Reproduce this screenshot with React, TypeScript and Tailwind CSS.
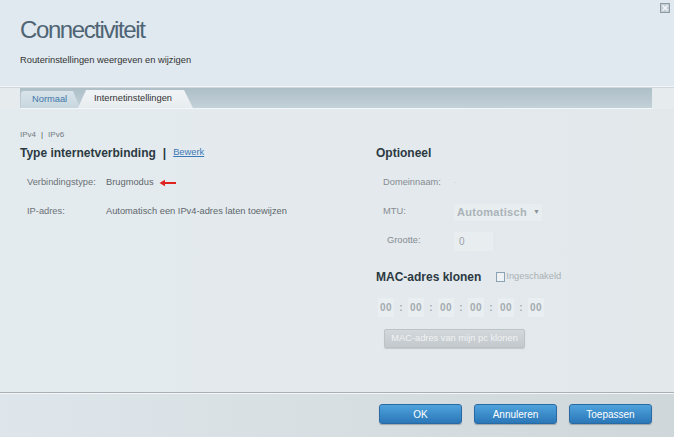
import React from "react";

function CloseIcon() {
  return (
    <svg width="10" height="10" viewBox="0 0 10 10" className="absolute left-[660px] top-[3px]">
      <rect x="0.5" y="0.5" width="9" height="9" fill="#c3cdd3" stroke="#8e9ca6" />
      <path d="M2.5 2.5 L7.5 7.5 M7.5 2.5 L2.5 7.5" stroke="#f4f7f9" strokeWidth="1.6" />
    </svg>
  );
}

function RedArrow() {
  return (
    <svg width="18" height="8" viewBox="0 0 18 8" className="ml-[5px]">
      <path d="M0.5 4 L6 0.8 L6 7.2 Z" fill="#e0231f" />
      <rect x="5" y="3" width="12" height="2" fill="#e0231f" />
    </svg>
  );
}

function MacBox() {
  return (
    <div className="w-[16px] h-[19px] bg-[#e9eef1] flex items-center justify-center text-[10px] font-bold text-[#a3abb0] tracking-[0.5px]">
      00
    </div>
  );
}

function Colon() {
  return <span className="w-[14px] text-center text-[10px] font-bold text-[#a3abb0]">:</span>;
}

export default function App() {
  const btn =
    "w-[83px] h-[20px] rounded-[3px] border border-[#2a6aa2] bg-linear-to-b from-[#4fa3dc] to-[#2a77b8] text-white text-[10px] flex items-center justify-center shadow-[0_1px_1px_rgba(0,0,0,0.25)]";
  return (
    <div className="relative w-[674px] h-[437px] overflow-hidden bg-[#e6ebee] font-['Liberation_Sans',Arial,sans-serif] text-[9.3px]">
      {/* Header */}
      <div className="h-[88px] bg-[#e0e9ef] px-[20px] pt-[18px] border-b border-[#cfd8de] shadow-[inset_0_-6px_0_-5px_#f2f6f8]">
        <div className="text-[24px] leading-[24px] text-[#4f6474] tracking-[-1.4px]">Connectiviteit</div>
        <div className="mt-[12px] text-[9.3px] leading-[12px] text-[#333]">Routerinstellingen weergeven en wijzigen</div>
      </div>
      <CloseIcon />

      {/* Tab bar */}
      <div className="flex">
        <div className="ml-[20px] w-[633px] h-[20px] bg-linear-to-b from-[#aebfc8] to-[#c3d1d8] flex items-end border-r border-[#e4eaed]">
          <div className="ml-[1px] w-[59px] h-[17px] rounded-tl-[3px] bg-linear-to-b from-[#d9e4ea] to-[#c7d6de] text-[#3f77ab] flex items-center pl-[11px] [clip-path:polygon(0_0,calc(100%-7px)_0,100%_100%,0_100%)]">
            Normaal
          </div>
          <div className="-ml-[2px] w-[115px] h-[18px] bg-linear-to-b from-[#f1f4f6] to-[#e7ecef] text-[#333] flex items-center pl-[16px] [clip-path:polygon(0_100%,8px_0,calc(100%-9px)_0,100%_100%)]">
            Internetinstellingen
          </div>
        </div>
      </div>
      <div className="h-[1px] bg-[#f3f6f8] mx-[20px] w-[633px]" />

      {/* Content */}
      <div className="h-[283px] flex bg-linear-to-r from-[#e4ebef] to-[#e3e8eb]">
        {/* Left column */}
        <div className="w-[376px] pl-[20px] pt-[20px]">
          <div className="flex items-center h-[12px] text-[8px] text-[#707a80]">
            <span>IPv4</span>
            <span className="mx-[5px] text-[#555]">|</span>
            <span>IPv6</span>
          </div>
          <div className="h-[20px] mt-[2px] flex items-center">
            <span className="text-[12px] font-bold text-[#2b3942]">Type internetverbinding</span>
            <span className="text-[12px] font-bold text-[#2b3942] mx-[7px]">|</span>
            <span className="text-[9.3px] text-[#3d78b6] underline">Bewerk</span>
          </div>
          <div className="pl-[7px] text-[#6a7176]">
            <div className="h-[29px] mt-[5px] flex items-center">
              <span className="w-[79px]">Verbindingstype:</span>
              <span className="text-[#60676c]">Brugmodus</span>
              <RedArrow />
            </div>
            <div className="h-[29px] flex items-center">
              <span className="w-[79px]">IP-adres:</span>
              <span className="text-[#60676c]">Automatisch een IPv4-adres laten toewijzen</span>
            </div>
          </div>
        </div>

        {/* Right column */}
        <div className="pt-[34px]">
          <div className="h-[20px] flex items-center text-[12px] font-bold text-[#2b3942]">Optioneel</div>
          <div className="pl-[7px] text-[#858c91]">
            <div className="h-[29px] mt-[5px] flex items-center">
              <span className="w-[71px]">Domeinnaam:</span>
              <span className="w-[1px] h-[1px] bg-[#c9d0d4]" />
            </div>
            <div className="h-[29px] flex items-center">
              <span className="w-[71px]">MTU:</span>
              <div className="w-[88px] h-[17px] mt-[2px] bg-[#e8edf0] flex items-center pl-[3px] text-[11px] font-bold text-[#aab3b8] tracking-[0.3px]">
                Automatisch
                <span className="ml-[6px] text-[7px] text-[#8a9297]">▼</span>
              </div>
            </div>
            <div className="h-[29px] flex items-center">
              <span className="w-[71px] pl-[4px]">Grootte:</span>
              <div className="w-[39px] h-[19px] mt-[1px] bg-[#e8edf0] flex items-center pl-[5px] text-[10px] text-[#9aa2a7]">0</div>
            </div>
          </div>
          <div className="h-[20px] mt-[12px] flex items-center">
            <span className="text-[12px] font-bold text-[#2b3942]">MAC-adres klonen</span>
            <span className="ml-[15px] w-[9px] h-[10px] border border-[#8aa2b4] bg-[#eef2f5]" />
            <span className="ml-[1px] text-[#a9b1b6]">Ingeschakeld</span>
          </div>
          <div className="mt-[11px] ml-[2px] flex items-center">
            <MacBox />
            <Colon />
            <MacBox />
            <Colon />
            <MacBox />
            <Colon />
            <MacBox />
            <Colon />
            <MacBox />
            <Colon />
            <MacBox />
          </div>
          <div className="mt-[12px] ml-[8px] w-[141px] h-[19px] rounded-[2px] border border-[#bcc3c7] bg-linear-to-b from-[#d3d8db] to-[#c2c8cc] text-[#f1f3f4] flex items-center justify-center shadow-[0_1px_1px_rgba(0,0,0,0.15)]">
            MAC-adres van mijn pc klonen
          </div>
        </div>
      </div>

      {/* Footer */}
      <div className="h-[46px] border-t border-[#a9b0b5] shadow-[inset_0_1px_0_#f4f6f7] bg-linear-to-r from-[#dfe6eb] to-[#d0d7da] flex justify-end items-start pt-[11px] pr-[22px] gap-[12px]">
        <button className={btn}>OK</button>
        <button className={btn}>Annuleren</button>
        <button className={btn}>Toepassen</button>
      </div>
    </div>
  );
}
